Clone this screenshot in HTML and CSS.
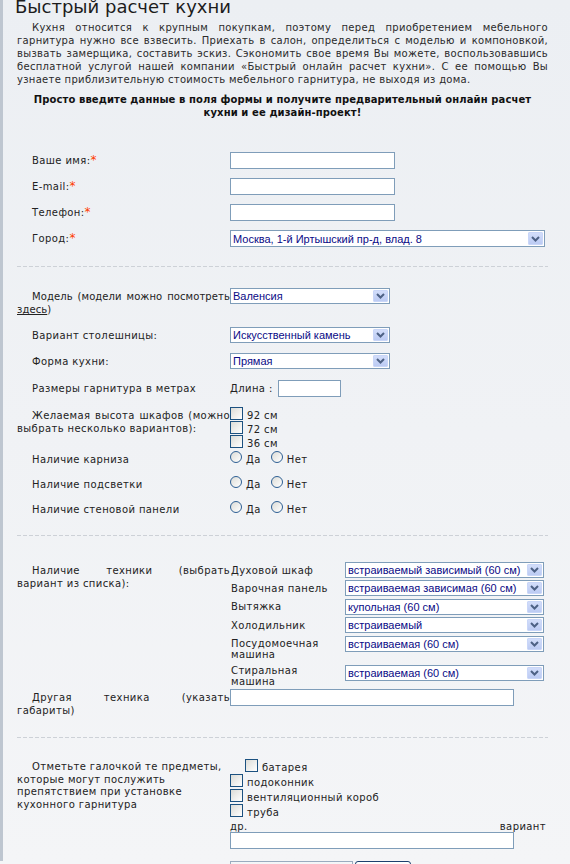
FILE: index.html
```html
<!DOCTYPE html>
<html lang="ru">
<head>
<meta charset="utf-8">
<title>Быстрый расчет кухни</title>
<link rel="stylesheet" href="styles.css">
</head>
<body>
<div class="page">
  <h1 class="title">Быстрый расчет кухни</h1>
  <p class="intro">Кухня относится к крупным покупкам, поэтому перед приобретением мебельного гарнитура нужно все взвесить. Приехать в салон, определиться с моделью и компоновкой, вызвать замерщика, составить эскиз. Сэкономить свое время Вы можете, воспользовавшись бесплатной услугой нашей компании «Быстрый онлайн расчет кухни». С ее помощью Вы узнаете приблизительную стоимость мебельного гарнитура, не выходя из дома.</p>
  <p class="lead">Просто введите данные в поля формы и получите предварительный онлайн расчет кухни и ее дизайн-проект!</p>

  <form class="form">
    <div class="sec sec-contacts">
      <div class="row"><label class="lbl">Ваше имя:<span class="req">*</span></label><input class="txt w-short" type="text"></div>
      <div class="row"><label class="lbl">E-mail:<span class="req">*</span></label><input class="txt w-short" type="text"></div>
      <div class="row"><label class="lbl">Телефон:<span class="req">*</span></label><input class="txt w-short" type="text"></div>
      <div class="row"><label class="lbl">Город:<span class="req">*</span></label>
        <div class="sel w-city tall"><select><option>Москва, 1-й Иртышский пр-д, влад. 8</option></select><span class="sel-btn"><svg width="9" height="6" viewBox="0 0 9 6"><path d="M1 1 L4.5 4.5 L8 1" fill="none" stroke="#4d6185" stroke-width="2"/></svg></span></div>
      </div>
    </div>

    <div class="sep"></div>

    <div class="sec sec-kitchen">
      <div class="row row-model"><label class="lbl just">Модель (модели можно посмотреть <a href="#" class="lnk">здесь</a>)</label>
        <div class="sel w-mid"><select><option>Валенсия</option></select><span class="sel-btn"><svg width="9" height="6" viewBox="0 0 9 6"><path d="M1 1 L4.5 4.5 L8 1" fill="none" stroke="#4d6185" stroke-width="2"/></svg></span></div>
      </div>
      <div class="row"><label class="lbl">Вариант столешницы:</label>
        <div class="sel w-mid"><select><option>Искусственный камень</option></select><span class="sel-btn"><svg width="9" height="6" viewBox="0 0 9 6"><path d="M1 1 L4.5 4.5 L8 1" fill="none" stroke="#4d6185" stroke-width="2"/></svg></span></div>
      </div>
      <div class="row"><label class="lbl">Форма кухни:</label>
        <div class="sel w-mid"><select><option>Прямая</option></select><span class="sel-btn"><svg width="9" height="6" viewBox="0 0 9 6"><path d="M1 1 L4.5 4.5 L8 1" fill="none" stroke="#4d6185" stroke-width="2"/></svg></span></div>
      </div>
      <div class="row row-size"><label class="lbl">Размеры гарнитура в метрах</label>
        <div class="inline"><span class="ctl-text">Длина :</span><input class="txt w-len" type="text"></div>
      </div>
      <div class="row row-height"><label class="lbl just">Желаемая высота шкафов (можно выбрать несколько вариантов):</label>
        <div class="checks">
          <label class="chk-line h14"><input type="checkbox" class="cb"><span>92 см</span></label>
          <label class="chk-line h14"><input type="checkbox" class="cb"><span>72 см</span></label>
          <label class="chk-line h14"><input type="checkbox" class="cb"><span>36 см</span></label>
        </div>
      </div>
      <div class="row"><label class="lbl">Наличие карниза</label>
        <div class="radios"><label class="rd-item"><input type="radio" name="r1" class="rb"><span>Да</span></label><label class="rd-item"><input type="radio" name="r1" class="rb"><span>Нет</span></label></div>
      </div>
      <div class="row"><label class="lbl">Наличие подсветки</label>
        <div class="radios"><label class="rd-item"><input type="radio" name="r2" class="rb"><span>Да</span></label><label class="rd-item"><input type="radio" name="r2" class="rb"><span>Нет</span></label></div>
      </div>
      <div class="row"><label class="lbl">Наличие стеновой панели</label>
        <div class="radios"><label class="rd-item"><input type="radio" name="r3" class="rb"><span>Да</span></label><label class="rd-item"><input type="radio" name="r3" class="rb"><span>Нет</span></label></div>
      </div>
    </div>

    <div class="sep"></div>

    <div class="sec sec-tech">
      <div class="row"><label class="lbl just lbl-tech">Наличие техники (выбрать вариант из списка):</label>
        <div class="appl">
          <div class="appl-row"><span class="appl-lbl">Духовой шкаф</span><div class="sel w-appl"><select><option>встраиваемый зависимый (60 см)</option></select><span class="sel-btn"><svg width="9" height="6" viewBox="0 0 9 6"><path d="M1 1 L4.5 4.5 L8 1" fill="none" stroke="#4d6185" stroke-width="2"/></svg></span></div></div>
          <div class="appl-row"><span class="appl-lbl">Варочная панель</span><div class="sel w-appl"><select><option>встраиваемая зависимая (60 см)</option></select><span class="sel-btn"><svg width="9" height="6" viewBox="0 0 9 6"><path d="M1 1 L4.5 4.5 L8 1" fill="none" stroke="#4d6185" stroke-width="2"/></svg></span></div></div>
          <div class="appl-row"><span class="appl-lbl">Вытяжка</span><div class="sel w-appl"><select><option>купольная (60 см)</option></select><span class="sel-btn"><svg width="9" height="6" viewBox="0 0 9 6"><path d="M1 1 L4.5 4.5 L8 1" fill="none" stroke="#4d6185" stroke-width="2"/></svg></span></div></div>
          <div class="appl-row"><span class="appl-lbl">Холодильник</span><div class="sel w-appl"><select><option>встраиваемый</option></select><span class="sel-btn"><svg width="9" height="6" viewBox="0 0 9 6"><path d="M1 1 L4.5 4.5 L8 1" fill="none" stroke="#4d6185" stroke-width="2"/></svg></span></div></div>
          <div class="appl-row"><span class="appl-lbl">Посудомоечная машина</span><div class="sel w-appl"><select><option>встраиваемая (60 см)</option></select><span class="sel-btn"><svg width="9" height="6" viewBox="0 0 9 6"><path d="M1 1 L4.5 4.5 L8 1" fill="none" stroke="#4d6185" stroke-width="2"/></svg></span></div></div>
          <div class="appl-row appl-last"><span class="appl-lbl">Стиральная машина</span><div class="sel w-appl"><select><option>встраиваемая (60 см)</option></select><span class="sel-btn"><svg width="9" height="6" viewBox="0 0 9 6"><path d="M1 1 L4.5 4.5 L8 1" fill="none" stroke="#4d6185" stroke-width="2"/></svg></span></div></div>
        </div>
      </div>
      <div class="row row-other"><label class="lbl just">Другая техника (указать габариты)</label><input class="txt w-long" type="text"></div>
    </div>

    <div class="sep sep-last"></div>

    <div class="sec sec-obst">
      <div class="row"><label class="lbl lbl-obst">Отметьте галочкой те предметы, которые могут послужить препятствием при установке кухонного гарнитура</label>
        <div class="obst">
          <label class="chk-line h15 first"><input type="checkbox" class="cb"><span>батарея</span></label>
          <label class="chk-line h15"><input type="checkbox" class="cb"><span>подоконник</span></label>
          <label class="chk-line h15"><input type="checkbox" class="cb"><span>вентиляционный короб</span></label>
          <label class="chk-line h15"><input type="checkbox" class="cb"><span>труба</span></label>
          <div class="other-line"><span>др.</span><span>вариант</span></div>
          <input class="txt w-long" type="text">
          <div class="btns"><button type="submit" class="btn btn-main">Рассчитать</button><button type="reset" class="btn btn-alt">Сброс</button></div>
        </div>
      </div>
    </div>
  </form>
</div>
</body>
</html>
```
FILE: styles.css
```css
* { box-sizing: border-box; }
html, body { margin: 0; padding: 0; }
body {
  background: linear-gradient(#eceff3, #f4f5f7);
  font-family: "DejaVu Sans", Verdana, sans-serif;
  font-size: 10px;
  color: #222;
  height: 864px;
  overflow: hidden;
}
.page {
  border-left: 3px solid #bec6d0;
  padding: 0 22px 0 14px;
  height: 864px;
}
.title {
  font-family: "DejaVu Sans", Verdana, sans-serif;
  font-weight: normal;
  font-size: 18px;
  line-height: 20px;
  margin: -3px 0 0 -2px;
  color: #1c1c1c;
}
.intro {
  margin: 4px 0 0;
  text-indent: 15px;
  text-align: justify;
  line-height: 13px;
  letter-spacing: 0.3px;
  color: #2a2a2a;
}
.lead {
  margin: 7px 0 0;
  padding: 0 14px;
  font-weight: bold;
  text-align: center;
  line-height: 13px;
  letter-spacing: 0.1px;
  color: #111;
}
.form { margin-top: 33px; }
.sec { display: flex; flex-direction: column; }
.sec-contacts { gap: 9px; }
.sec-kitchen { gap: 10px; margin-top: 21px; }
.sec-tech { margin-top: 26px; }
.sec-obst { margin-top: 21px; }
.sep {
  height: 1px;
  margin-top: 19px;
  background: repeating-linear-gradient(to right, #cdd1d7 0 4px, transparent 4px 6px);
}
.sep-last { margin-top: 20px; }
.row {
  display: grid;
  grid-template-columns: 213px 318px;
  align-items: start;
}
.lbl {
  text-indent: 15px;
  line-height: 13px;
  padding-top: 2px;
  letter-spacing: 0.4px;
  color: #222;
}
.lbl.just { text-align: justify; }
.req { color: #ff3c00; font-size: 12px; line-height: 10px; }
.lnk { color: #222; text-decoration: underline; }
.row-model .lbl { padding-bottom: 1px; letter-spacing: 0.1px; }
.row-size { margin-top: 1px; }
.row-height { margin-bottom: -8px; }

.txt {
  height: 17px;
  border: 1px solid #7f9db9;
  background: #fff;
  padding: 0 2px;
  font: 11px "Liberation Sans", Arial, sans-serif;
  outline: none;
  margin: 0;
}
.w-short { width: 165px; }
.w-len { width: 63px; }
.w-long { width: 284px; }

.sel {
  display: flex;
  align-items: stretch;
  height: 16px;
  border: 1px solid #7f9db9;
  background: #fff;
  padding: 1px;
}
.sel.tall { height: 17px; }
.sel select {
  -webkit-appearance: none;
  appearance: none;
  flex: 1;
  min-width: 0;
  border: 0;
  background: transparent;
  padding: 0 0 0 1px;
  margin: 0;
  font: 11px/12px "Liberation Sans", Arial, sans-serif;
  color: #0a0a86;
  outline: none;
}
.sel-btn {
  width: 15px;
  flex: none;
  display: flex;
  align-items: center;
  justify-content: center;
  background: linear-gradient(#d2ddfa, #bccbf3);
  border: 1px solid #c9d6f8;
  border-radius: 1px;
}
.w-city { width: 315px; }
.w-mid { width: 160px; }
.w-appl { width: 199px; }

.inline { display: flex; align-items: flex-start; gap: 5px; }
.ctl-text { line-height: 13px; padding-top: 2px; letter-spacing: 0.4px; }

.checks { display: flex; flex-direction: column; }
.chk-line {
  display: flex;
  align-items: flex-start;
  letter-spacing: 0.4px;
}
.chk-line.h14 { height: 14px; }
.chk-line.h15 { height: 15px; }
.chk-line span { line-height: 13px; padding-top: 2px; }
.chk-line.first { padding-left: 15px; }
.cb {
  -webkit-appearance: none;
  appearance: none;
  width: 13px;
  height: 13px;
  margin: 0 4px 0 0;
  border: 1px solid #1c5180;
  background: linear-gradient(135deg, #dcdcd7, #ffffff);
  flex: none;
}

.radios { display: flex; align-items: flex-start; gap: 10px; }
.rd-item { display: flex; align-items: flex-start; gap: 4px; letter-spacing: 0.4px; }
.rd-item span { line-height: 13px; padding-top: 2px; }
.rb {
  -webkit-appearance: none;
  appearance: none;
  width: 12px;
  height: 12px;
  margin: 0;
  border: 1px solid #2c5e93;
  border-radius: 50%;
  background: linear-gradient(135deg, #dcdcd7, #ffffff);
  flex: none;
}

.lbl-tech { padding-top: 2px; }
.appl { display: grid; grid-template-columns: 115px 199px; row-gap: 2.4px; }
.appl-row { display: contents; }
.appl-lbl {
  line-height: 11px;
  padding: 2.5px 10px 0 1px;
  letter-spacing: 0.4px;
}
.appl-last .appl-lbl { padding-top: 2.5px; }
.appl-last .sel { margin-top: 3px; }
.row-other { margin-top: 2px; }

.lbl-obst { padding-top: 2.5px; line-height: 12.5px; }
.obst { display: flex; flex-direction: column; align-items: flex-start; }
.other-line {
  display: flex;
  justify-content: space-between;
  width: 316px;
  height: 13px;
  line-height: 11px;
  padding-top: 2px;
  letter-spacing: 0.4px;
}
.btns { display: flex; gap: 2px; margin-top: 12px; }
.btn {
  height: 34px;
  font: 11px "DejaVu Sans", Verdana, sans-serif;
  margin: 0;
}
.btn-main {
  width: 123px;
  border: 1px solid #9aabbf;
  background: linear-gradient(#f4f6f8, #e2e7ed);
}
.btn-alt {
  width: 56px;
  border: 1px solid #1c3f6e;
  border-radius: 3px;
  background: linear-gradient(#ffffff, #ecebe6);
}
```
